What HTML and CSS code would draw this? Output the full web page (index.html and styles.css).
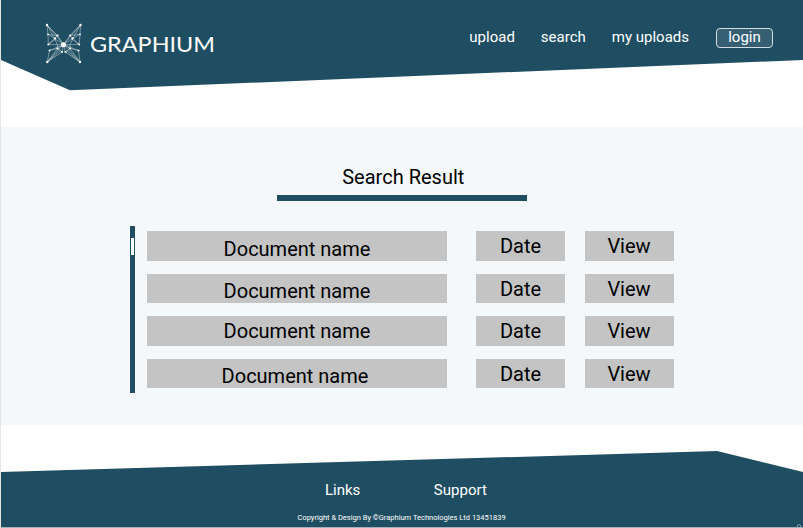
FILE: index.html
```html
<!DOCTYPE html>
<html lang="en">
<head>
<meta charset="utf-8">
<title>Graphium – Search Result</title>
<link rel="stylesheet" href="styles.css">
</head>
<body>
<div class="page">
  <header class="header">
    <a class="brand" aria-label="Graphium">
      <svg class="brand-logo" width="175" height="44" viewBox="43 22 175 44">
        <g fill="none" stroke="#fff" stroke-opacity=".62" stroke-width=".65">
          <path d="M47 25L48 34.3L48.3 44.5L57.5 44.7L63.5 44.5L57.5 35.5L47 25L54.5 38.5L48 34.3L57.5 35.5L48.3 44.5M47 25L63.5 44.5L54.5 38.5L57.5 44.7M48.3 44.5L56.5 38.5M63.5 44.5L57.5 48.5L49.5 50.5L47.3 62L57.5 48.5L62 52L47.3 62L63.5 44.5L49.5 50.5M57.5 44.7L57.5 48.5M62 52L63.5 44.5M47.3 62L61 50"/>
          <path d="M80.5 25L80 34.3L79.2 44.5L70 44.7L63.5 44.5L70 35.5L80.5 25L73 38.5L80 34.3L70 35.5L79.2 44.5M80.5 25L63.5 44.5L73 38.5L70 44.7M79.2 44.5L71 38.5M63.5 44.5L70 48.5L78.5 50.5L80 62L70 48.5L65.5 52L80 62L63.5 44.5L78.5 50.5M70 44.7L70 48.5M65.5 52L63.5 44.5M80 62L66 50"/>
        </g>
        <g fill="#fff">
          <circle cx="63.5" cy="44.8" r="2.5"/>
          <circle cx="47" cy="25" r="1.2"/><circle cx="80.5" cy="25" r="1.2"/>
          <circle cx="47.3" cy="62" r="1.2"/><circle cx="80" cy="62" r="1.2"/>
          <circle cx="48" cy="34.3" r=".9"/><circle cx="80" cy="34.3" r=".9"/>
          <circle cx="48.3" cy="44.5" r="1"/><circle cx="79.2" cy="44.5" r="1"/>
          <circle cx="49.5" cy="50.5" r=".9"/><circle cx="78.5" cy="50.5" r="1.1"/>
          <circle cx="57.5" cy="35.5" r="1.1"/><circle cx="70" cy="35.5" r="1.1"/>
          <circle cx="55" cy="38.3" r="1.1"/><circle cx="72.5" cy="38.3" r="1.1"/>
          <circle cx="57.5" cy="48.5" r="1.1"/><circle cx="70" cy="48.5" r="1.1"/>
          <circle cx="62" cy="52" r="1.1"/><circle cx="65.5" cy="52" r="1.1"/>
        </g>
        <text class="brand-name" x="90" y="51.6" textLength="125" lengthAdjust="spacingAndGlyphs">GRAPHIUM</text>
      </svg>
    </a>
    <nav class="nav">
      <a>upload</a>
      <a>search</a>
      <a>my uploads</a>
      <a class="login">login</a>
    </nav>
  </header>

  <main class="results">
    <h1 class="title">Search Result</h1>
    <div class="list">
      <div class="scrollbar"><div class="thumb"></div></div>
      <div class="rows">
        <div class="row"><div class="cell name lowest">Document name</div><div class="cell date">Date</div><div class="cell">View</div></div>
        <div class="row"><div class="cell name low">Document name</div><div class="cell date">Date</div><div class="cell">View</div></div>
        <div class="row"><div class="cell name">Document name</div><div class="cell date">Date</div><div class="cell">View</div></div>
        <div class="row"><div class="cell name low shifted">Document name</div><div class="cell date">Date</div><div class="cell">View</div></div>
      </div>
    </div>
  </main>

  <footer class="footer">
    <div class="footer-links"><a>Links</a><a>Support</a></div>
    <div class="footer-base">
      <p class="copyright">Copyright &amp; Design By ©Graphium Technologies Ltd 13451839</p>
      <svg class="corner-mark" width="4" height="3" viewBox="0 0 4 3"><path d="M.5 3V1.2Q2 0 3.5 1.2V3" fill="none" stroke="#a3b0bd" stroke-width=".8"/></svg>
    </div>
  </footer>
</div>
</body>
</html>
```

FILE: styles.css
```css
* { box-sizing: border-box; }

body {
  margin: 0;
  background: #fff;
  font-family: Roboto, "Liberation Sans", sans-serif;
  overflow: hidden;
}

.page {
  width: 803px;
  height: 528px;
  display: flex;
  flex-direction: column;
  border-left: 1px solid #e5e5e5;
  border-bottom: 1px solid #a3b0bd;
}

.header {
  height: 90.5px;
  margin-bottom: 36.5px;
  display: flex;
  justify-content: space-between;
  align-items: flex-start;
  padding: 22px 30px 0 42px;
  background: #1f4e63;
  clip-path: polygon(0 0, 100% 0, 100% 60px, 69px 90.3px, 0 60px);
}

.brand-logo { display: block; }

.brand-name {
  font-family: Lato, sans-serif;
  font-size: 22px;
  fill: #fff;
}

.nav {
  display: flex;
  align-items: flex-start;
  padding-top: 5px;
  color: #fff;
  font-size: 15px;
  line-height: 20px;
  gap: 26px;
}

.login {
  width: 57px;
  height: 20px;
  margin: 1px 0 0 1px;
  border: 1px solid #d5dfe3;
  border-radius: 4px;
  background: #375f73;
  text-align: center;
  line-height: 17px;
}

.results {
  height: 298px;
  background: #f4f8fb;
}

.title {
  width: 250.4px;
  height: 74px;
  margin: 0 0 25px 275.6px;
  padding: 38px 0 0 3px;
  border-bottom: 6px solid #1f4e63;
  font-size: 20px;
  font-weight: 400;
  line-height: 24px;
  text-align: center;
}

.list {
  display: flex;
  gap: 12px;
  padding-left: 129px;
}

.scrollbar {
  width: 5px;
  height: 167.4px;
  padding: 12px 1px 0;
  background: #1f4e63;
}

.thumb {
  height: 17px;
  background: #fff;
}

.rows {
  display: grid;
  gap: 13.3px;
  padding-top: 5.3px;
  align-content: start;
}

.row {
  display: grid;
  grid-template-columns: 329px 108.5px 89px;
}

.cell {
  height: 29.3px;
  background: #c4c4c4;
  font-size: 20px;
  line-height: 31.3px;
  text-align: center;
  white-space: nowrap;
}

.name { width: 300px; }
.date { width: 89px; }
.low { padding-top: 2px; }
.lowest { padding-top: 3px; }
.shifted { padding-right: 4px; }

.footer {
  height: 76px;
  margin-top: auto;
  background: #1f4e63;
  clip-path: polygon(0 21px, 716px 0, 100% 21px, 100% 100%, 0 100%);
  color: #fff;
}

.footer-links {
  display: flex;
  gap: 73.5px;
  padding: 29px 0 0 324px;
  font-size: 15px;
  line-height: 20px;
}

.footer-base {
  height: 27px;
  display: flex;
  justify-content: space-between;
  align-items: flex-end;
  padding: 0 2px 0 296.5px;
}

.copyright {
  margin: 0 0 4px;
  font-size: 7.5px;
  line-height: 10px;
}

.corner-mark { display: block; }
```
